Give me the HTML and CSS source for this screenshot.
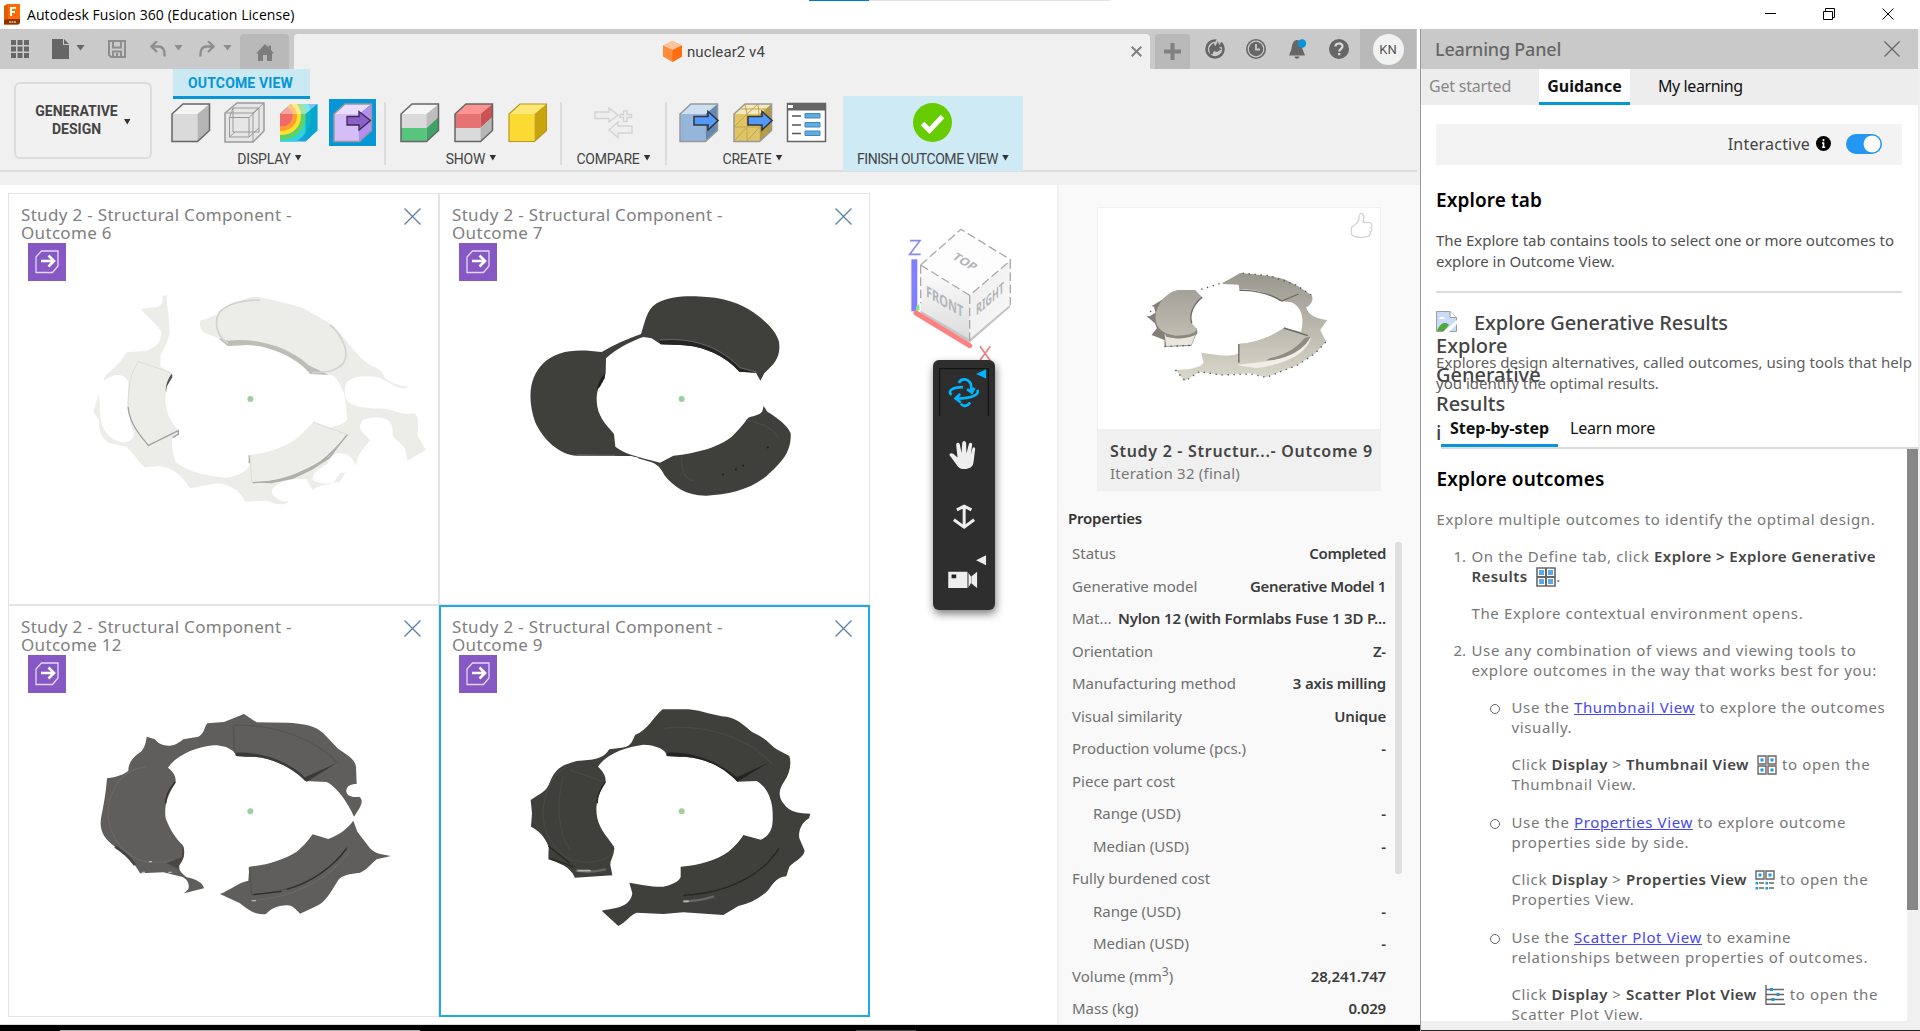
FILE: index.html
```html
<!DOCTYPE html>
<html lang="en">
<head>
<meta charset="utf-8">
<title>Autodesk Fusion 360 (Education License)</title>
<link rel="stylesheet" href="styles.css">
</head>
<body>
<header class="titlebar">
  <svg class="app-icon" width="18" height="21" viewBox="0 0 18 21"><path d="M1 2L5 0H17V19L15 20.500H1Z" fill="#ff6b00"/><path d="M1 15H17V19L15 20.500H1Z" fill="#8c3500"/><path d="M1 2L5 0V15L1 16Z" fill="#e35a00"/><path d="M8 12V4H13M8 8H12" fill="none" stroke="#fff" stroke-width="2"/><path d="M6 18H13" stroke="#d9b9a5" stroke-width="1.500" stroke-dasharray="2 .5"/></svg>
  <h1>Autodesk Fusion 360 (Education License)</h1>
  <div class="progress"><i></i></div>
  <svg class="win-buttons" width="140" height="30" viewBox="0 0 140 30" fill="none" stroke="#000"><path d="M5 13.500H16"/><path d="M63.500 11.500H72.500V19.500H63.500ZM65.500 11V8.500H74.500V17.500H73"/><path d="M122.500 8.500L133.500 19.500M133.500 8.500L122.500 19.500"/></svg>
</header>

<main class="app">
  <section class="workspace">
    <div class="quickbar">
      <svg class="i-grid" width="18" height="18" viewBox="0 0 18 18" fill="#666"><path d="M0 0h5v5H0zM6.500 0h5v5h-5zM13 0h5v5h-5zM0 6.500h5v5H0zM6.500 6.500h5v5h-5zM13 6.500h5v5h-5zM0 13h5v5H0zM6.500 13h5v5h-5zM13 13h5v5h-5z"/></svg>
      <svg class="i-file" width="17" height="20" viewBox="0 0 17 20" fill="#666"><path d="M0 0H11V6H17V20H0ZM12 0L17 5H12Z"/></svg>
      <span class="caret c1"></span>
      <svg class="i-save" width="18" height="18" viewBox="0 0 18 18" fill="none" stroke="#8e8e8e" stroke-width="2"><path d="M1 1H17V17H3L1 15ZM5 1V7.500H13V1M5 17V11.500H13V17M9 13V16"/></svg>
      <svg class="i-undo" width="16" height="16" viewBox="0 0 16 16" fill="none" stroke="#8e8e8e" stroke-width="2.400"><path d="M7 0L1.500 5.500L7 11M2 5.500H8C13 5.500 15 9 14.500 15.500"/></svg>
      <span class="caret c2"></span>
      <svg class="i-redo" width="16" height="16" viewBox="0 0 16 16" fill="none" stroke="#8e8e8e" stroke-width="2.400"><path d="M9 0L14.500 5.500L9 11M14 5.500H8C3 5.500 1 9 1.500 15.500"/></svg>
      <span class="caret c3"></span>
      <div class="home-tab"><svg width="18" height="17" viewBox="0 0 18 17" fill="#7d7d7d"><path d="M9 0L12.500 3.500V1.500H15V6L18 9.500H16V17H11V11H7V17H2V9.500H0Z"/></svg></div>
      <div class="doc-tab">
        <svg width="19" height="21" viewBox="0 0 19 21"><path d="M9.500 0L19 4.500V15.500L9.500 21L0 15.500V4.500Z" fill="#ff8b3d"/><path d="M9.500 0L19 4.500L9.500 9L0 4.500Z" fill="#ffc59c"/><path d="M19 4.500V15.500L9.500 21V9Z" fill="#ff6f0f"/></svg>
        <span>nuclear2 v4</span>
        <svg class="doc-close" width="11" height="11" viewBox="0 0 11 11" stroke="#808080" stroke-width="2"><path d="M.7.7L10.300 10.300M10.300.7L.7 10.300"/></svg>
      </div>
      <div class="plus-tab"><svg width="17" height="17" viewBox="0 0 17 17" stroke="#808080" stroke-width="4"><path d="M8.500 0V17M0 8.500H17"/></svg></div>
      <svg class="i-ext" width="20" height="20" viewBox="0 0 20 20"><circle cx="10" cy="10" r="8.500" fill="none" stroke="#666" stroke-width="2.600"/><path d="M5 15L4 9L7 5L10 4L14 2L13 6L17 5L14 9L17 10L12 13L10 16Z" fill="#666"/><path d="M12 0L9 5L10 7L13 6L19 1Z" fill="#cacaca"/><path d="M13 2L10.500 7L12 9L18 7.500L17 5.500L14 6.500Z" fill="#666"/><path d="M7 16L9 12L12 13L12 17Z" fill="#cacaca"/></svg>
      <svg class="i-clock" width="20" height="20" viewBox="0 0 20 20"><circle cx="10" cy="10" r="10" fill="#666"/><circle cx="10" cy="10" r="7.800" fill="none" stroke="#cacaca" stroke-width="1.200"/><path d="M10 5V10.500H14" fill="none" stroke="#cacaca" stroke-width="1.800"/></svg>
      <svg class="i-bell" width="20" height="20" viewBox="0 0 20 20"><path d="M8.500 1C4.500 2 4 6 3.500 10L1 16.500H17L14.500 10C14 6 13 2 9.500 1ZM6.500 17.500H11.500C11 20.500 7 20.500 6.500 17.500Z" fill="#666"/><circle cx="14" cy="4.500" r="4.200" fill="#0696d7"/></svg>
      <svg class="i-help" width="20" height="20" viewBox="0 0 20 20"><circle cx="10" cy="10" r="10" fill="#666"/><path d="M6.500 7.500C6.500 3.500 13.500 3.500 13.500 7.300C13.500 9.800 10.200 9.800 10.200 12.500M10.200 14V16.300" fill="none" stroke="#dadada" stroke-width="2.200"/></svg>
      <div class="account"><span>KN</span></div>
    </div>

    <div class="ribbon">
      <button class="mode"><span>GENERATIVE<br>DESIGN</span><i class="caret small"></i></button>
      <div class="ribbon-main">
        <div class="ribbon-tab">OUTCOME VIEW</div>
        <div class="tools">
          <div class="group g-display">
            <div class="icons">
              <svg viewBox="0 0 47 47"><path d="M5 15H30.500V42.500H5Z" fill="#dadada"/><path d="M5 15L16 5H42.500L30.500 15Z" fill="#f4f4f4"/><path d="M30.500 15L42.500 5V31.500L30.500 42.500Z" fill="#b5b5b5"/><path class="cube-line" d="M5 15L16 5H42.500V31.500L30.500 42.500H5Z"/></svg>
              <svg viewBox="0 0 47 47" fill="none" stroke="#9a9a9a"><path fill="#e6e6e6" stroke-width="1.500" d="M4 14L16 4H43V32L32 43H4Z"/><path d="M4 14H32V43M32 14L43 4M8.500 18.500H28V38H8.500ZM12 9H38V33H12ZM8.500 18.500L12 9M28 18.500L38 9M28 38L38 29M8.500 38L14 33"/></svg>
              <svg viewBox="0 0 47 47"><defs><clipPath id="cube-clip"><path d="M5 15L16 5H42.500V31.500L30.500 42.500H5Z"/></clipPath></defs><g clip-path="url(#cube-clip)"><path fill="#1e9fe8" d="M0 0H47V47H0Z"/><circle cx="7" cy="17" r="29" fill="#2dd4dc"/><circle cx="7" cy="17" r="24" fill="#5fd16a"/><circle cx="7" cy="17" r="19" fill="#ffe12b"/><circle cx="7" cy="17" r="15" fill="#ff9d2e"/><circle cx="7" cy="17" r="10.500" fill="#f06a6a"/><path d="M5 15L16 5H42.500L30.500 15Z" fill="#fff" opacity=".4"/><path d="M30.500 15L42.500 5V31.500L30.500 42.500Z" fill="#00a8c4" opacity=".75"/></g></svg>
              <svg class="selected" viewBox="0 0 47 47"><path d="M5 15H30.500V42.500H5Z" fill="#d6bdf7"/><path d="M5 15L16 5H42.500L30.500 15Z" fill="#eadcff"/><path d="M30.500 15L42.500 5V31.500L30.500 42.500Z" fill="#b68df0"/><path class="cube-soft" d="M5 15L16 5H42.500V31.500L30.500 42.500H5Z"/><path d="M18 17.500H30V12.500L41.500 21.500L30 31V26H18Z" fill="#8c5fc9" stroke="#3b2b55" stroke-width="1.300"/></svg>
            </div>
            <div class="label">DISPLAY<i class="caret small"></i></div>
          </div>
          <i class="sep"></i>
          <div class="group g-show">
            <div class="icons">
              <svg viewBox="0 0 47 47"><path d="M5 15H30.500V29H5Z" fill="#dadada"/><path d="M5 15L16 5H42.500L30.500 15Z" fill="#f6f6f6"/><path d="M30.500 15L42.500 5V18L30.500 29Z" fill="#bdbdbd"/><path d="M5 29H30.500V42.500H5Z" fill="#58c57c"/><path d="M30.500 29L42.500 18V31.500L30.500 42.500Z" fill="#3ea364"/><path class="cube-line" d="M5 15L16 5H42.500V31.500L30.500 42.500H5Z"/></svg>
              <svg viewBox="0 0 47 47"><path d="M5 15H30.500V29H5Z" fill="#e57373"/><path d="M5 15L16 5H42.500L30.500 15Z" fill="#ff9292"/><path d="M30.500 15L42.500 5V18L30.500 29Z" fill="#c95252"/><path d="M5 29H30.500V42.500H5Z" fill="#dadada"/><path d="M30.500 29L42.500 18V31.500L30.500 42.500Z" fill="#b5b5b5"/><path class="cube-line" d="M5 15L16 5H42.500V31.500L30.500 42.500H5Z"/></svg>
              <svg viewBox="0 0 47 47"><path d="M5 15H30.500V42.500H5Z" fill="#fbda34"/><path d="M5 15L16 5H42.500L30.500 15Z" fill="#ffe877"/><path d="M30.500 15L42.500 5V31.500L30.500 42.500Z" fill="#c9a40d"/><path d="M5 15L16 5H42.500V31.500L30.500 42.500H5Z" fill="none" stroke="#b8981c" stroke-width="1.200"/></svg>
            </div>
            <div class="label">SHOW<i class="caret small"></i></div>
          </div>
          <i class="sep"></i>
          <div class="group g-compare">
            <div class="icons"><svg viewBox="0 0 47 47" fill="#eee" stroke="#d3d3d3" stroke-width="1.400"><path d="M5 13H19V9L28 16L19 23V19.500H5ZM42 27H28V23L19 31L28 38.500V34H42ZM33.500 12H37V15.500H41.500V18.500H37V22.500H33.500V18.500H30V15.500H33.500Z"/></svg></div>
            <div class="label">COMPARE<i class="caret small"></i></div>
          </div>
          <i class="sep"></i>
          <div class="group g-create">
            <div class="icons">
              <svg viewBox="0 0 47 47"><path d="M5 15H30.500V42.500H5Z" fill="#95b5da"/><path d="M5 15L16 5H42.500L30.500 15Z" fill="#cde0f1"/><path d="M30.500 15L42.500 5V31.500L30.500 42.500Z" fill="#6689b2"/><path class="cube-soft" d="M5 15L16 5H42.500V31.500L30.500 42.500H5Z"/><path class="export" d="M19 17.500H33V12.500L43 21.500L33 31V26H19Z"/></svg>
              <svg viewBox="0 0 47 47"><path d="M5 15H30.500V42.500H5Z" fill="#dfc566"/><path d="M5 15L16 5H42.500L30.500 15Z" fill="#f4e9bf"/><path d="M30.500 15L42.500 5V31.500L30.500 42.500Z" fill="#b39a44"/><path d="M5 28H30.500M18 15V42.500M5 28L18 15M5 42L30.500 15M18 42L30.500 28L42 18M18 15L29 5M10 10H37M16 5L18 15M29 5L30 15M36 10V37" fill="none" stroke="#c2a74b" stroke-width="1"/><path class="cube-soft" d="M5 15L16 5H42.500V31.500L30.500 42.500H5Z"/><path class="export" d="M19 17.500H33V12.500L43 21.500L33 31V26H19Z"/></svg>
              <svg viewBox="0 0 47 47"><path d="M4.500 4.500H42.500V42.500H4.500Z" fill="#fff" stroke="#666" stroke-width="1.500"/><path d="M4 4H43V11.500H4Z" fill="#666"/><path d="M5 7.500H10" stroke="#fff" stroke-width="3"/><path d="M9 17H18M9 26H18M9 34.500H18" stroke="#555" stroke-width="1.500"/><path d="M22 14.500H37V19H22ZM22 23.500H37V28H22ZM22 32H37V36.500H22Z" fill="#62abe0" stroke="#3f86bb"/></svg>
            </div>
            <div class="label">CREATE<i class="caret small"></i></div>
          </div>
          <div class="group g-finish">
            <div class="icons"><svg viewBox="0 0 47 47"><circle cx="23.500" cy="23.500" r="19.500" fill="#6c0"/><path d="M13.500 24.500L20.500 31.500L33.500 17.500" fill="none" stroke="#fff" stroke-width="5"/></svg></div>
            <div class="label">FINISH OUTCOME VIEW<i class="caret small"></i></div>
          </div>
        </div>
      </div>
    </div>

    <div class="stage">
      <div class="outcomes">
        <article class="cell">
          <svg class="model" viewBox="24 9 1293 1236">
            <path fill="#ecede8" d="M488 318L500 314L501 345L506 375L509 430L498 465L482 495L481 530L516 550L498 600C492 640 500 670 515 695L535 722L533 735L518 745C512 760 518 790 527 815C560 845 620 858 680 863C720 858 745 840 752 820L748 795C800 790 850 775 890 745C915 725 930 705 940 696L988 712C1010 710 1035 700 1042 688C1038 650 1036 620 1030 605C1020 585 1010 560 995 556L930 552L910 530C870 490 800 462 740 465L683 468L655 445L625 432C605 430 598 410 600 392C625 385 640 378 655 372C680 345 705 338 730 330C750 318 775 318 790 324C840 335 880 345 910 355C945 375 975 390 1000 408L1025 435C1060 480 1090 515 1115 528C1140 535 1150 550 1155 565C1175 578 1190 588 1225 590C1215 598 1190 595 1170 580L1135 562C1090 555 1060 560 1042 575C1030 595 1033 610 1040 630C1055 650 1100 657 1160 656C1190 665 1215 675 1240 670C1258 675 1255 700 1252 735L1278 780L1222 812L1215 775L1178 738C1180 700 1170 685 1130 682C1100 682 1078 690 1080 715C1090 735 1105 742 1111 752C1085 775 1072 800 1067 828C1058 800 1040 788 1010 790C990 800 980 825 985 820C960 835 935 850 938 870C960 885 985 880 1000 878L1020 850L1037 847L1020 875C985 885 950 885 938 900L920 868C870 862 820 880 815 905C820 925 845 935 865 935C850 948 830 944 800 932L735 935C720 905 700 885 650 880L570 895C545 855 520 835 480 828L432 832L380 770L330 760C300 745 295 710 297 690L280 665L297 608L302 690C310 730 340 757 375 758C395 755 403 740 402 728C385 695 382 640 385 575C370 548 340 550 312 572C310 550 350 540 380 487L440 482C480 470 487 440 483 425C465 395 440 380 422 356L465 352C485 350 490 335 488 318Z"/>
            <path fill="#bdbdb8" d="M655 445L683 468L740 465C800 465 870 495 910 530L932 552L985 554L925 525C890 490 800 440 684 452Z"/>
            <path fill="none" stroke="#d2d3ce" stroke-width="5" d="M684 460C650 440 640 395 660 365C690 335 740 330 780 330M990 404C1030 440 1050 490 1030 520C1000 550 970 545 935 548"/>
            <path fill="none" stroke="#a3a39e" stroke-width="4" d="M384 650C388 690 405 720 445 766L535 722V733L518 742M748 796V820M758 878C880 875 960 840 1042 734"/>
            <path fill="#b0b0ab" d="M758 878C850 872 900 850 985 800L1042 734L990 805L935 840L880 866L815 880Z"/>
            <path fill="#55554f" d="M516 550C505 565 495 585 498 608L500 590L517 562Z"/>
            <path fill="none" stroke="#dcddd8" stroke-width="3" d="M512 548L415 515C390 550 384 600 384 650M755 878L750 796M940 697L1040 733"/>
            <circle class="origin" cx="751" cy="627" r="9"/>
          </svg>
          <h2>Study 2 - Structural Component -<br>Outcome 6</h2>
          <svg class="badge" viewBox="0 0 38 38"><path d="M8 14L13.500 8H30V23L24.500 29.500H8Z" fill="none" stroke="#e4d7f5" stroke-width="1.300"/><path d="M13 18H25M20.500 12.500L26 18L20.500 23.500" fill="none" stroke="#fff" stroke-width="2.600"/></svg>
          <svg class="close" viewBox="0 0 16 16"><path d="M.5.5L15.500 15.500M15.500.5L.5 15.500"/></svg>
        </article>
        <article class="cell">
          <svg class="model" viewBox="27 9 1293 1236">
            <path fill="#3f3f3c" d="M633 432C645 400 648 360 680 340C720 315 790 317 830 321C900 325 950 350 985 378C1020 405 1040 430 1047 455C1053 500 1035 520 1003 550L991 572L978 548L928 545C890 500 820 466 750 465L692 463L665 445L640 441C600 455 560 475 528 505L527 550C500 590 497 620 502 650C510 690 535 710 552 732L556 770C580 790 620 800 690 818L730 797C800 790 870 770 905 740C935 710 945 695 955 683C975 676 995 675 998 660L1001 648L1012 665C1050 688 1075 710 1082 730C1085 790 1050 820 1010 858C960 900 890 915 830 917C770 918 730 890 703 855C692 835 685 825 665 817L600 798L440 797C390 795 340 750 315 695C290 620 300 560 340 520C380 480 440 476 515 486C550 465 590 448 633 432Z"/>
            <path fill="#252523" d="M686 452C800 440 880 480 930 535L980 548L928 545C890 500 820 466 750 465L692 463Z"/>
            <path fill="none" stroke="#777" stroke-width="2" d="M440 794L555 796M690 450C800 440 880 480 930 533L980 546"/>
            <path fill="none" stroke="#484845" stroke-width="5" d="M755 800C755 850 765 865 790 872M950 690C1010 705 1035 720 1045 745"/>
            <path stroke="#fff" stroke-width="5" d="M598 800L625 806"/>
            <path stroke="#1d1d1b" stroke-width="5" d="M1010 772H1016M937 827H942M915 838H920M877 853H882"/>
            <path fill="#1d1d1b" d="M526 550C510 565 505 580 500 600L510 590L524 565Z"/>
            <circle class="origin" cx="755" cy="627" r="9"/>
          </svg>
          <h2>Study 2 - Structural Component -<br>Outcome 7</h2>
          <svg class="badge" viewBox="0 0 38 38"><path d="M8 14L13.500 8H30V23L24.500 29.500H8Z" fill="none" stroke="#e4d7f5" stroke-width="1.300"/><path d="M13 18H25M20.500 12.500L26 18L20.500 23.500" fill="none" stroke="#fff" stroke-width="2.600"/></svg>
          <svg class="close" viewBox="0 0 16 16"><path d="M.5.5L15.500 15.500M15.500.5L.5 15.500"/></svg>
        </article>
        <article class="cell">
          <svg class="model" viewBox="24 15 1293 1236">
            <path fill="#5f5e5c" d="M440 410L465 418C475 432 490 438 510 437C530 435 540 425 550 418L595 410C615 400 612 380 622 370L672 366L732 342L770 367L860 368C910 370 950 378 970 400L1015 447C1050 470 1065 480 1068 500L1070 552C1050 552 1038 560 1039 575C1042 590 1060 592 1078 590C1090 600 1085 615 1075 630L1062 650C1045 610 1010 560 980 546L915 543C870 495 800 468 740 470L708 468L705 458C685 440 660 435 640 436C590 440 530 465 504 503C520 515 530 530 526 550C500 590 492 620 497 655C510 690 530 720 548 735C558 760 550 780 538 795C535 810 545 820 560 832C590 838 610 850 612 865L552 880L565 868C570 850 560 835 545 830L490 817L420 820C405 790 380 765 345 740C310 715 298 690 303 655C310 620 318 580 321 535C350 530 370 525 385 512C385 480 410 465 425 453C435 440 438 425 440 410Z"/>
            <path fill="#5f5e5c" d="M1060 662L1072 695L1110 745C1130 765 1150 763 1173 768L1130 778C1110 795 1100 810 1080 818C1050 822 1025 825 1015 840C990 880 975 910 945 920L900 941C885 925 875 915 860 916C830 918 815 925 798 942C770 945 750 935 720 910L660 882C690 870 715 848 745 842L748 800C800 795 850 780 890 755C915 735 925 720 938 703L985 717C1015 705 1040 690 1060 662Z"/>
            <path fill="#3a3a38" d="M706 458C800 455 870 490 915 532L1012 488L920 545C870 495 800 468 740 470L708 468Z"/>
            <path fill="none" stroke="#555452" stroke-width="4" d="M700 378L704 458M1012 488C960 430 840 370 700 376M1043 740C1000 810 900 875 755 884L748 802"/>
            <path fill="none" stroke="#454442" stroke-width="8" d="M345 740C370 755 390 775 405 795"/>
            <path fill="none" stroke="#2c2c2a" stroke-width="4" d="M526 545C505 570 497 590 497 610M1040 745C1000 800 930 850 860 868M760 884L845 874"/>
            <path fill="none" stroke="#696866" stroke-width="4" d="M440 500C350 510 310 600 330 680C350 740 400 785 450 786C500 788 540 780 550 760M760 902C900 890 990 830 1050 755"/>
            <path fill="#494847" d="M548 735C558 760 550 780 538 795L535 808L500 790L545 770Z"/>
            <path stroke="#bbb" stroke-width="4" d="M755 902H768M425 817H435M505 817H515M447 785H456"/>
            <circle class="origin" cx="751" cy="634" r="9"/>
          </svg>
          <h2>Study 2 - Structural Component -<br>Outcome 12</h2>
          <svg class="badge" viewBox="0 0 38 38"><path d="M8 14L13.500 8H30V23L24.500 29.500H8Z" fill="none" stroke="#e4d7f5" stroke-width="1.300"/><path d="M13 18H25M20.500 12.500L26 18L20.500 23.500" fill="none" stroke="#fff" stroke-width="2.600"/></svg>
          <svg class="close" viewBox="0 0 16 16"><path d="M.5.5L15.500 15.500M15.500.5L.5 15.500"/></svg>
        </article>
        <article class="cell current">
          <svg class="model" viewBox="27 15 1293 1236">
            <path fill="#3f3f3c" d="M698 328L775 328C820 332 850 348 890 350C930 358 950 385 970 398C1010 415 1020 435 1040 448L1078 468C1085 490 1080 520 1062 545C1045 570 1045 590 1060 610C1080 640 1110 640 1141 641L1137 655C1110 670 1105 700 1108 715L1124 752C1120 775 1090 785 1078 800L1069 829C1040 832 1030 850 1015 870C990 895 960 910 925 918L880 945L760 937L700 942L620 938C600 945 590 965 565 978L515 932C550 925 600 925 607 880L598 848C640 855 670 862 700 860C735 852 750 840 752 830V800C810 795 860 780 895 755C920 735 930 720 940 705L992 719C1015 710 1030 690 1028 650C1030 600 1010 560 980 543L922 545C880 500 820 470 750 470L710 468C710 450 680 435 640 434C590 440 530 460 504 500C520 515 530 530 526 550C500 590 495 620 502 655C510 690 535 715 552 740C555 765 540 780 541 795L547 826L435 833C420 800 390 790 355 778L356 740C345 710 325 690 303 680L306 640L302 600C330 580 350 575 360 545C380 500 400 495 440 483C490 480 520 478 538 448L575 443C600 440 605 430 615 405C655 390 670 350 698 328Z"/>
            <path fill="#242422" d="M712 458C800 455 870 490 920 532L1020 486L922 545C880 500 820 470 750 470L710 468Z"/>
            <path fill="none" stroke="#272725" stroke-width="4" d="M526 545C508 570 500 590 502 610M1047 745C1000 820 900 880 760 886M355 738L420 790M360 775L430 800"/>
            <path fill="none" stroke="#484845" stroke-width="4" d="M410 500C340 540 320 650 360 720C400 780 430 785 470 786C520 786 545 770 552 745M400 530C380 600 380 690 420 750M700 385C820 370 950 410 1025 490M420 510L520 545"/>
            <path fill="none" stroke="#666" stroke-width="7" stroke-linecap="round" d="M440 812C470 818 500 815 525 808M762 904C800 904 830 896 850 890"/>
            <path stroke="#b5b5b2" stroke-width="5" stroke-linecap="round" d="M445 812H480M762 904H775"/>
            <circle class="origin" cx="755" cy="634" r="9"/>
          </svg>
          <h2>Study 2 - Structural Component -<br>Outcome 9</h2>
          <svg class="badge" viewBox="0 0 38 38"><path d="M8 14L13.500 8H30V23L24.500 29.500H8Z" fill="none" stroke="#e4d7f5" stroke-width="1.300"/><path d="M13 18H25M20.500 12.500L26 18L20.500 23.500" fill="none" stroke="#fff" stroke-width="2.600"/></svg>
          <svg class="close" viewBox="0 0 16 16"><path d="M.5.5L15.500 15.500M15.500.5L.5 15.500"/></svg>
        </article>
      </div>

      <div class="navigator">
        <svg class="viewcube" width="187" height="175" viewBox="0 -15 561 525">
          <defs>
            <linearGradient id="front" x1="0" y1="0" x2="0" y2="1"><stop offset="0" stop-color="#fff"/><stop offset="1" stop-color="#dcdcdc"/></linearGradient>
            <linearGradient id="right" x1="0" y1="0" x2="1" y2="1"><stop offset="0" stop-color="#ececec"/><stop offset="1" stop-color="#fafafa"/></linearGradient>
          </defs>
          <path fill="#c4c4c4" d="M152 360L298 444L420 342V352L298 458L152 370Z"/>
          <path fill="#fdfdfd" d="M273 118L423 210L299 316L152 225Z"/>
          <path fill="url(#front)" d="M152 225L299 316V448L152 362Z"/>
          <path fill="url(#right)" d="M299 316L423 210L419 345L299 448Z"/>
          <path fill="none" stroke="#aaa" stroke-width="4" stroke-dasharray="26 11" d="M152 225L273 118L423 210M152 225L299 316L423 210M299 316V452M152 225V340M421 210V345"/>
          <text transform="matrix(.78 .46 -.60 .58 244 205)" font-size="42">TOP</text>
          <text transform="matrix(.72 .41 0 1 168 319)" font-size="46">FRONT</text>
          <text transform="matrix(.60 -.51 0 1 318 377)" font-size="45">RIGHT</text>
          <path stroke="#8080ff" stroke-width="18" d="M133 208V364"/>
          <path fill="#80e880" d="M138 350L148 342V360L138 364Z"/>
          <path stroke="#ff8080" stroke-width="15" stroke-linecap="round" d="M138 369L299 467"/>
          <path fill="none" stroke="#8888ee" stroke-width="5" d="M120 152H150L119 193H152"/>
          <path fill="none" stroke="#ee8080" stroke-width="5" d="M330 469L361 512M361 469L329 512"/>
        </svg>
        <svg class="navbar" width="62" height="250" viewBox="188 510 187 750">
          <path fill="none" stroke="#151515" stroke-width="4" d="M208 676V534H355V676"/>
          <path fill="#00b7ff" d="M318 550L348 536V564Z"/>
          <g fill="none" stroke="#00b7ff" stroke-width="8"><path d="M266 577C272 563 293 562 302 580L305 602M291 596L305 606L313 592M322 598C330 614 300 625 258 624M270 610L256 624L272 636M300 636C292 648 280 650 272 640M278 590C245 590 230 603 244 613"/></g>
          <path fill="#eee" d="M238 795C236 789 244 787 249 791L262 802L258 765C257 756 267 755 269 763L274 789L276 760C277 750 287 750 288 760L289 790L296 762C299 754 307 757 306 764L302 794L307 775C310 768 316 771 315 778L310 818C308 830 298 837 283 837C268 837 262 830 257 821Z"/>
          <path fill="none" stroke="#eee" stroke-width="9" d="M260 960L282 949L304 960M282 950V1010M251 990L282 1012L312 990"/>
          <path fill="#eee" d="M318 1112L348 1097V1127ZM234 1147H292V1196H234ZM295 1150L303 1162V1180L295 1194ZM304 1160L321 1147V1196L304 1182Z"/>
          <path fill="#222" d="M244 1155H258V1166H244Z"/>
        </svg>
      </div>

      <aside class="properties">
        <div class="card">
          <svg class="thumb" viewBox="147 54 843 663">
            <defs><linearGradient id="metal" gradientUnits="userSpaceOnUse" x1="0" y1="250" x2="0" y2="560"><stop offset="0" stop-color="#9a978f"/><stop offset="1" stop-color="#d8d5c9"/></linearGradient></defs>
            <path fill="url(#metal)" d="M520 278L545 265L572 249L605 252L660 258L705 268L745 288L785 315C795 325 785 345 770 352C775 370 790 385 833 390L812 420L830 455L797 490L745 525L650 562L605 550L515 555L450 545L405 573L378 540C410 540 450 535 462 520L455 488L510 496C545 500 565 492 567 490V462C620 458 665 440 703 414L755 425C765 380 755 350 725 337L690 333C650 305 610 295 570 300L567 284L520 282Z"/>
            <path fill="#827f77" d="M345 325L312 345L318 368L295 382L316 400L322 415L306 435L345 450L345 470L425 468L442 430L380 400Z"/>
            <path fill="#e9e6dd" d="M345 432L440 430L425 465L350 468Z"/>
            <path fill="#8b8880" d="M442 415L444 430C425 445 390 450 350 440L345 428Z"/>
            <path fill="url(#metal)" d="M385 300L437 300L458 322C430 345 418 375 427 400L442 417C437 432 410 437 380 437C345 435 318 415 318 385C318 350 345 308 385 300Z"/>
            <path fill="#f0eee6" d="M560 525L640 515C700 510 740 480 785 442C770 490 720 520 620 535Z"/>
            <path fill="#8f8c84" d="M700 470C745 455 770 440 783 440C765 480 710 508 650 512Z"/>
            <path fill="url(#metal)" d="M567 462C620 458 665 440 703 414L772 436C740 480 690 512 570 516Z"/>
            <path fill="none" stroke="#6b6963" stroke-width="4" d="M458 322C430 345 418 375 427 400M570 301C620 300 660 310 697 333L747 312M568 462V518M703 414L775 437"/>
            <path fill="none" stroke="#55534e" stroke-width="4" stroke-dasharray="4 14" d="M455 298L520 278M378 540L407 573L450 545L515 555L605 552L650 562L745 525L797 490L830 455M785 315L740 285L660 257L572 249M295 382L312 345M345 470L425 466"/>
            <path fill="none" stroke="#d4d4d4" stroke-width="4" d="M906 112C918 105 930 95 929 80C928 68 941 66 943 80L941 97H960C970 99 968 110 964 112C969 117 967 125 962 125C965 131 960 138 954 140C930 145 910 140 906 133Z"/>
          </svg>
          <div class="caption"><h3>Study 2 - Structur...- Outcome 9</h3><p>Iteration 32 (final)</p></div>
        </div>
        <h4>Properties</h4>
        <div class="prop-list">
          <dl>
            <div><dt>Status</dt><dd class="tight">Completed</dd></div>
            <div><dt>Generative model</dt><dd class="tight">Generative Model 1</dd></div>
            <div><dt>Mat...</dt><dd>Nylon 12 (with Formlabs Fuse 1 3D P...</dd></div>
            <div><dt>Orientation</dt><dd>Z-</dd></div>
            <div><dt>Manufacturing method</dt><dd>3 axis milling</dd></div>
            <div><dt>Visual similarity</dt><dd>Unique</dd></div>
            <div><dt>Production volume (pcs.)</dt><dd>-</dd></div>
            <div><dt>Piece part cost</dt></div>
            <div><dt class="sub">Range (USD)</dt><dd>-</dd></div>
            <div><dt class="sub">Median (USD)</dt><dd>-</dd></div>
            <div><dt>Fully burdened cost</dt></div>
            <div><dt class="sub">Range (USD)</dt><dd>-</dd></div>
            <div><dt class="sub">Median (USD)</dt><dd>-</dd></div>
            <div><dt>Volume (mm<sup>3</sup>)</dt><dd>28,241.747</dd></div>
            <div><dt>Mass (kg)</dt><dd>0.029</dd></div>
          </dl>
          <i class="scroll-thumb"></i>
        </div>
      </aside>
    </div>
    <div class="taskbar"><i></i><i></i></div>
  </section>

  <aside class="learning">
    <div class="lp-head"><span>Learning Panel</span><svg width="16" height="16" viewBox="0 0 16 16" stroke="#666" stroke-width="1.300"><path d="M.5.5L15.500 15.500M15.500.5L.5 15.500"/></svg></div>
    <nav class="lp-tabs"><span class="t-start">Get started</span><span class="t-guide">Guidance</span><span class="t-my">My learning</span></nav>
    <div class="lp-body">
      <div class="interactive"><span>Interactive</span><svg width="15" height="15" viewBox="0 0 15 15"><circle cx="7.500" cy="7.500" r="7.500"/><path d="M7.500 3V5.300M7.500 6.300V11.500M6 7H8M6 11.300H9.200" stroke="#fff" stroke-width="1.600"/></svg><i class="toggle"></i></div>
      <h2 class="explore-tab">Explore tab</h2>
      <p class="intro">The Explore tab contains tools to select one or more outcomes to<br>explore in Outcome View.</p>
      <hr>
      <section class="topic">
        <h3>Explore Generative Results</h3>
        <div class="broken"><svg width="21" height="21" viewBox="0 0 21 21"><path d="M.5.5H14L20.500 6.500V20.500H.5Z" fill="#c9dcf7" stroke="#9c9c9c"/><path d="M14 .5V6.500H20.500" fill="#fff" stroke="#9c9c9c"/><path d="M3 8C4 5 8 5 9 8Z" fill="#fff"/><path d="M1 20C4 12 9 10 13 14L8 20Z" fill="#52a838"/><path d="M7 21L21 9V13L13 21Z" fill="#fff"/></svg><span>Explore<br>Generative<br>Results<br>i</span></div>
        <p><span class="l1">Explores design alternatives, called outcomes, using tools that help</span><br>you identify the optimal results.</p>
      </section>
      <nav class="step-tabs"><span class="active">Step-by-step</span><span>Learn more</span></nav>
    </div>
    <div class="steps">
      <div class="steps-text">
        <h2>Explore outcomes</h2>
        <p>Explore multiple outcomes to identify the optimal design.</p>
        <div class="step"><span class="num">1.</span><p>On the Define tab, click <b>Explore &gt; Explore Generative<br>Results</b> <svg class="ico" viewBox="0 0 20 20"><path d="M1 1H19V19H1Z" fill="#fff" stroke="#666" stroke-width="1.600"/><path d="M10 1V19M1 10H19" stroke="#666" stroke-width="2"/><path d="M3 3H8V8H3ZM12 3H17V8H12ZM3 12H8V17H3ZM12 12H17V17H12Z" fill="#5aa9e6"/></svg>.</p></div>
        <p class="sub-note">The Explore contextual environment opens.</p>
        <div class="step"><span class="num">2.</span><p>Use any combination of views and viewing tools to<br>explore outcomes in the way that works best for you:</p></div>
        <div class="bullet"><p>Use the <a>Thumbnail View</a> to explore the outcomes<br>visually.</p>
          <p>Click <b>Display</b> &gt; <b>Thumbnail View</b> <svg class="ico" viewBox="0 0 20 20"><path d="M1 1H9V9H1ZM11 1H19V9H11ZM1 11H9V19H1ZM11 11H19V19H11Z" fill="#fff" stroke="#666" stroke-width="1.400"/><path d="M3.500 3.500h3v3h-3zM13.500 3.500h3v3h-3zM3.500 13.500h3v3h-3zM13.500 13.500h3v3h-3z" fill="#1e96e6"/></svg> to open the<br>Thumbnail View.</p></div>
        <div class="bullet"><p>Use the <a>Properties View</a> to explore outcome<br>properties side by side.</p>
          <p>Click <b>Display</b> &gt; <b>Properties View</b> <svg class="ico" viewBox="0 0 20 20"><path d="M1 1H9V9H1ZM11 1H19V9H11Z" fill="#fff" stroke="#666" stroke-width="1.400"/><path d="M4 13H9M14 13H19M4 18H9M14 18H19" stroke="#666" stroke-width="1.400"/><path d="M3.500 3.500h3v3h-3zM13.500 3.500h3v3h-3zM.5 12h2.500v2.500H.5zM10.500 12h2.500v2.500h-2.500zM.5 17h2.500v2.500H.5zM10.500 17h2.500v2.500h-2.500z" fill="#1e96e6"/></svg> to open the<br>Properties View.</p></div>
        <div class="bullet"><p>Use the <a>Scatter Plot View</a> to examine<br>relationships between properties of outcomes.</p>
          <p>Click <b>Display</b> &gt; <b>Scatter Plot View</b> <svg class="ico" viewBox="0 0 20 20"><path d="M1 0V19.300H20M1 4.500H19M1 9.500H19M1 14.500H19" fill="none" stroke="#666" stroke-width="1.400"/><path d="M5 3h3v3H5zM11.500 8h3v3h-3zM6.500 13h3v3h-3z" fill="#1e96e6"/></svg> to open the<br>Scatter Plot View.</p></div>
      </div>
      <i class="steps-scroll"></i>
    </div>
    <div class="lp-foot"></div>
  </aside>
</main>
</body>
</html>
```

FILE: styles.css
```css
* { box-sizing: border-box; }
body { margin: 0; width: 1920px; height: 1031px; overflow: hidden; background: #fff; color: #444; font: 15px/20px "Noto Sans", sans-serif; }
h1, h2, h3, h4, p, dl, dd { margin: 0; font-weight: 400; white-space: nowrap; }
svg { display: block; flex: none; }

/* window title */
.titlebar { position: relative; display: flex; height: 29px; padding: 4px 0 0 3px; }
.titlebar h1 { margin: 1px 0 0 6px; flex: 1; color: #000; font: 14px/19px "Open Sans", sans-serif; letter-spacing: .07px; }
.progress { position: absolute; left: 809px; top: 0; width: 301px; height: 1px; background: #e2e2e2; }
.progress i { display: block; width: 60px; height: 1px; background: #0078d7; }
.win-buttons { margin: -4px 20px 0 0; }

.app { display: grid; grid-template-columns: 1420px 500px; height: 1002px; }
.workspace { display: flex; flex-direction: column; min-width: 0; }

/* quick access bar */
.quickbar { display: flex; align-items: center; height: 40px; width: 1417px; padding-left: 11px; background: #cacaca; }
.caret { flex: none; width: 9px; height: 6px; background: #666; clip-path: polygon(0 0, 100% 0, 50% 100%); }
.caret.small { display: inline-block; width: 7px; height: 6px; background: #333; }
.i-file { margin-left: 23px; }
.c1 { margin: 0 0 3px 7px; }
.i-save { margin-left: 23px; }
.i-undo { margin-left: 24px; }
.c2, .c3 { background: #8e8e8e; margin: 0 0 3px 8px; }
.i-redo { margin-left: 16px; }
.home-tab { display: flex; align-items: center; justify-content: center; width: 49px; height: 35px; margin: 5px 0 0 8px; padding-top: 1px; background: #b9b9b9; border-radius: 4px 4px 0 0; }
.doc-tab { position: relative; display: flex; align-items: center; width: 856px; height: 35px; margin: 5px 0 0 5px; padding-left: 369px; background: #f0f0f0; border-radius: 4px 4px 0 0; font: 15px/20px Roboto, sans-serif; color: #444; }
.doc-tab span { margin: 1px 0 0 5px; letter-spacing: .08px; }
.doc-close { margin-left: auto; margin-right: 8px; }
.plus-tab { display: flex; align-items: center; justify-content: center; width: 35px; height: 35px; margin: 5px 0 0 5px; background: #b9b9b9; border-radius: 4px 4px 0 0; }
.i-ext { margin-left: 15px; }
.i-clock { margin-left: 21px; }
.i-bell { margin-left: 22px; }
.i-help { margin-left: 21px; }
.account { display: flex; align-items: center; justify-content: center; width: 56px; height: 40px; margin-left: 11px; background: #b9b9b9; }
.account span { width: 31px; height: 31px; border-radius: 50%; background: #f2f2f2; font: 13px/31px Roboto, sans-serif; text-align: center; color: #555; }

/* ribbon */
.ribbon { display: flex; height: 116px; padding-left: 14px; background: linear-gradient(#dedede, #dedede) 0 101px / 1417px 2px no-repeat #f0f0f0; font-family: Roboto, sans-serif; color: #444; }
.mode { display: flex; align-items: center; justify-content: center; gap: 6px; width: 138px; height: 77px; margin-top: 13px; padding: 0; border: 2px solid #dcdcdc; border-radius: 6px; background: #f1f1f1; font: 700 14px/17.500px Roboto, sans-serif; color: #444; }
.mode .caret { margin-top: 2px; }
.ribbon-tab { width: 137px; height: 30px; margin-left: 21px; padding-right: 2px; border-bottom: 3px solid #0696d7; background: #cae9f3; color: #0696d7; font-weight: 700; font-size: 14px; line-height: 28px; letter-spacing: .15px; text-align: center; }
.tools { display: flex; height: 72px; }
.sep { width: 2px; height: 63px; margin-top: 3px; background: #dcdcdc; }
.icons { display: flex; justify-content: center; gap: 7px; }
.icons svg { width: 47px; height: 47px; }
.icons .selected { background: #0696d7; }
.label { display: flex; align-items: center; justify-content: center; gap: 4px; height: 26px; font-size: 14px; letter-spacing: -.2px; }
.label .caret { margin-bottom: 3px; }
.g-display { width: 232px; padding: 0 8px 0 15px; }
.g-display .label { margin-left: -4px; }
.g-show { width: 174px; padding: 0 9px 0 10px; }
.g-show .label { margin-left: -5px; }
.g-compare { width: 103px; }
.g-create { width: 176px; padding: 0 13px 0 8px; }
.g-finish { width: 180px; height: 75px; margin-top: -3px; padding-top: 3px; background: #cdeaf5; }
.g-finish .icons { margin-left: -2px; }
.g-finish .label { letter-spacing: -.45px; }
.cube-line { fill: none; stroke: #666; stroke-width: 1.500; }
.cube-soft { fill: none; stroke: #999; stroke-width: 1.500; }
.export { fill: #5499ff; stroke: #333; stroke-width: 1.500; }

/* stage */
.stage { display: flex; height: 840px; background: #fff; border-bottom: 1px solid #dcdcdc; }
.outcomes { display: grid; grid-template: 412px 412px / 431px 431px; padding: 8px 0 0 8px; width: 870px; }
.cell { position: relative; padding: 13px 14px; box-shadow: inset 0 0 0 1px #e4e4e4; }
.cell.current { box-shadow: inset 0 0 0 2px #1fabe2; }
.model { position: absolute; inset: 0; width: 431px; height: 412px; }
.cell h2 { position: relative; margin-left: -1px; color: #808080; font-size: 17px; line-height: 17.500px; letter-spacing: .32px; }
.badge { position: relative; width: 38px; height: 38px; margin: 2px 0 0 6px; background: #8558c4; }
.close { position: absolute; left: 396px; top: 15px; width: 17px; height: 17px; stroke: #5b7fa6; stroke-width: 1.200; }
.origin { fill: #9fce9f; }

.navigator { width: 187px; }
.viewcube { overflow: visible; }
.viewcube text { font-family: "Noto Sans", sans-serif; font-weight: 700; fill: #b3b5b9; }
.navbar { position: relative; margin-left: 63px; border-radius: 6px; background: #2e2e2e; box-shadow: 1px 4px 9px rgba(0, 0, 0, .5); }

/* properties */
.properties { width: 363px; height: 839px; border-left: 2px solid #f0f0f0; background: #f9f9f9; overflow: hidden; }
.card { width: 284px; height: 284px; margin: 22px 0 0 38px; border: 1px solid #f0f0f0; background: #f0f0f0; }
.thumb { width: 282px; height: 221px; background: #fff; }
.caption { padding: 11px 0 0 12px; }
.caption h3 { color: #444; font-size: 16px; font-weight: 600; letter-spacing: .7px; line-height: 22px; }
.caption p { color: #777; letter-spacing: .23px; line-height: 22px; }
.properties h4 { margin: 17px 0 0 9px; color: #333; font-weight: 600; letter-spacing: -.19px; }
.prop-list { display: flex; margin-top: 9px; }
.prop-list dl { width: 327px; padding-left: 13px; }
.prop-list dl div { display: flex; justify-content: space-between; height: 32.500px; line-height: 32.500px; }
dt { color: #707070; white-space: nowrap; }
dt.sub { padding-left: 21px; }
dt sup { font-size: 12px; line-height: 0; vertical-align: 6px; }
dd { color: #3c3c3c; font-weight: 600; letter-spacing: -.17px; }
dd.tight { letter-spacing: -.35px; }
.scroll-thumb { width: 7px; height: 332px; margin: 5px 0 0 9px; border-radius: 3px; background: #dedede; }
.taskbar { display: flex; align-items: flex-end; height: 6px; background: #000; padding-left: 60px; }
.taskbar i { width: 360px; height: 1px; background: #aaa; }
.taskbar i + i { width: 60px; margin-left: 436px; background: #444; }

/* learning panel */
.learning { position: relative; display: flex; flex-direction: column; border-left: 1px solid #999; border-right: 2px solid #f0f0f0; background: #fff; }
.lp-head { display: flex; align-items: center; justify-content: space-between; height: 40px; padding: 0 18px 0 14px; background: #c9c9c9; color: #666; font-size: 18px; letter-spacing: -.2px; font-weight: 500; }
.lp-tabs { display: flex; height: 36px; background: #ededed; font-size: 16px; line-height: 34px; color: #111; }
.t-start { margin-left: 8px; width: 110px; color: #888; letter-spacing: -.2px; }
.t-guide { width: 91px; background: #fff; border-bottom: 3px solid #0696d7; font-weight: 700; text-align: center; }
.t-my { margin-left: 28px; letter-spacing: -.42px; }
.lp-body { height: 343px; padding: 19px 0 0 15px; }
.interactive { display: flex; align-items: center; justify-content: flex-end; width: 466px; height: 41px; padding: 0 20px 2px 0; background: #f3f3f3; color: #444; font-size: 16px; letter-spacing: .2px; }
.interactive svg { margin: 0 15px 0 6px; }
.toggle { width: 36px; height: 20px; border-radius: 10px; background: radial-gradient(circle at 26px 10px, #fff 8px, #2196f3 8.800px); }
.explore-tab { margin-top: 23px; color: #000; font-size: 19px; font-weight: 600; line-height: 24px; letter-spacing: .1px; }
.intro { margin-top: 18px; color: #505050; line-height: 21px; }
.lp-body hr { width: 466px; height: 2px; margin: 19px 0 0; border: 0; background: #dcdcdc; }
.topic { position: relative; height: 133px; padding-top: 17px; }
.topic h3 { padding-left: 38px; color: #444; font-size: 20px; font-weight: 500; line-height: 26px; letter-spacing: -.07px; }
.broken { position: absolute; left: 0; top: 18px; color: #444; font-size: 20px; font-weight: 500; line-height: 29px; }
.broken span { display: block; margin-top: -1px; }
.topic p { margin-top: 16px; color: #606060; line-height: 21px; position: relative; }
.topic .l1 { letter-spacing: .05px; }
.step-tabs { position: relative; display: flex; gap: 3px; width: 478px; height: 23px; margin: 0 0 0 5px; color: #111; font-size: 16px; line-height: 4px; border-bottom: 2px solid #dcdcdc; white-space: nowrap; }
.step-tabs span { padding: 0 9px; letter-spacing: -.2px; }
.step-tabs .active { width: 117px; border-bottom: 3px solid #0696d7; font-weight: 700; letter-spacing: 0; }
.steps { display: flex; height: 573px; overflow: hidden; background: linear-gradient(90deg, #fff 486px, #f0f0f0 486px); }
.steps-text { width: 486px; height: 573px; padding: 18.500px 0 0 15.500px; overflow: hidden; color: #777; line-height: 20.500px; letter-spacing: .62px; }
.steps-text h2 { color: #000; font-size: 19px; font-weight: 600; line-height: 24px; letter-spacing: .14px; margin-bottom: 18px; }
.steps-text p { line-height: 20.500px; }
.steps-text p b { color: #444; font-weight: 600; letter-spacing: .43px; }
.step { display: flex; margin-top: 16.500px; }
.num { width: 18px; margin-left: 17px; letter-spacing: 0; }
.sub-note { margin: 16px 0 0 35px; }
.bullet { position: relative; margin: 17px 0 0 75px; }
.step + .bullet { margin-top: 16px; }
.bullet::before { content: ""; position: absolute; left: -22px; top: 7px; width: 8px; height: 8px; border: 1.500px solid #666; border-radius: 50%; }
.bullet p + p { margin-top: 16px; }
.bullet a { color: #4646f0; text-decoration: underline; }
.ico { display: inline-block; width: 20px; height: 20px; margin: -6px 0 -5px 4px; vertical-align: middle; }
.steps-scroll { width: 11px; height: 462px; background: #878787; }
.lp-foot { height: 10px; margin-right: -2px; background: #f0f0f0; border-bottom: 1px solid #222; }
```
